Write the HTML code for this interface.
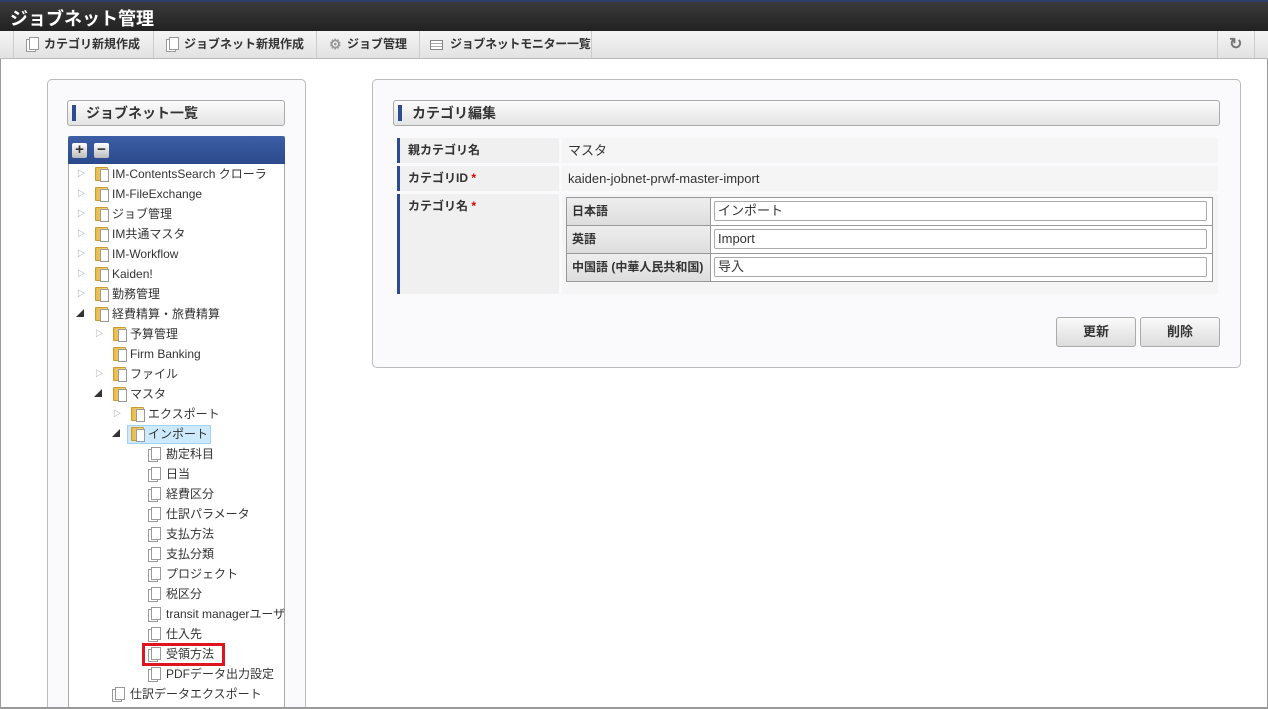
<!DOCTYPE html>
<html><head><meta charset="utf-8"><style>
*{box-sizing:border-box;margin:0;padding:0}
html{overflow:hidden;height:709px}
body{width:1268px;height:709px;overflow:hidden;background:#fff;font-family:"Liberation Sans","Noto Sans CJK JP",sans-serif;font-size:12px;color:#333;position:relative}
.abs{position:absolute}
.title{left:0;top:0;width:1268px;height:31px;background:linear-gradient(#3a3a3a,#222);border-top:2px solid #2d3e6a;color:#fff;font-size:18px;font-weight:bold;padding:3px 0 0 10px}
.tool{left:0;top:31px;width:1268px;height:28px;background:linear-gradient(#f4f4f4,#e2e2e2);border-bottom:1px solid #bbb}
.tb{position:absolute;top:0;height:27px;border-left:1px solid #ccc;font-size:12px;font-weight:bold;color:#333;line-height:27px;padding-left:10px;white-space:nowrap}
.panel{border:1px solid #bbb;border-radius:5px;background:#fafafc}
.hdr{border:1px solid #aaa;border-radius:3px;background:linear-gradient(#fbfbfb,#e4e4e4);font-size:14px;font-weight:bold;color:#333;padding-left:18px;line-height:24px}
.hdr:before{content:"";position:absolute;left:4px;top:4px;width:4px;height:16px;background:#2f4b8f}
.row{position:absolute;left:0;height:20px;line-height:20px;font-size:12px;color:#333;white-space:nowrap}
.arr{position:absolute;top:0;font-size:8px;color:#888}
.fold{position:absolute;top:3px;width:13px;height:14px;background:linear-gradient(90deg,#e9b94a,#f6d982);border:1px solid #c99a2e;border-radius:1px}
.fold:after{content:"";position:absolute;left:4px;top:1px;width:7px;height:11px;background:#fff;border:1px solid #999}
.leaf{position:absolute;top:3px;width:12px;height:14px}
.leaf:before{content:"";position:absolute;left:0;top:2px;width:8px;height:11px;background:#fff;border:1px solid #999}
.leaf:after{content:"";position:absolute;left:3px;top:0;width:8px;height:11px;background:#fff;border:1px solid #999}
.lab{position:absolute;background:#f0f0f0;border-left:3px solid #2f4b8f;font-weight:bold;padding-left:8px;font-size:12px}
.val{position:absolute;background:#f5f5f5;padding-left:6px;font-size:13px}
.req{color:#d00}
.il{position:absolute;background:linear-gradient(#eee,#ddd);font-weight:bold;padding-left:5px;font-size:12px;border-bottom:1px solid #999;line-height:26px}
.inp{position:absolute;background:#fff;border:1px solid #aaa;border-radius:2px;height:20px;font-size:13px;padding-left:3px;line-height:18px}
.btn{position:absolute;top:317px;width:80px;height:30px;border:1px solid #aaa;border-radius:3px;background:linear-gradient(#fafafa,#dcdcdc);text-align:center;line-height:28px;font-weight:bold;font-size:13px}
</style></head><body>
<div class="abs title">ジョブネット管理</div>
<div class="abs tool">
<div class="tb" style="left:13px;width:140px;padding-left:30px">カテゴリ新規作成<span class="leaf" style="left:12px;top:6px"></span></div>
<div class="tb" style="left:153px;width:163px;padding-left:30px">ジョブネット新規作成<span class="leaf" style="left:12px;top:6px"></span></div>
<div class="tb" style="left:316px;width:103px;padding-left:30px"><span style="position:absolute;left:12px;color:#999;font-size:14px">⚙</span>ジョブ管理</div>
<div class="tb" style="left:419px;width:173px;padding-left:30px;border-right:1px solid #ccc;letter-spacing:-0.3px"><span style="position:absolute;left:10px;top:9px;width:13px;height:10px;border:1px solid #888;background:repeating-linear-gradient(#fff 0 2px,#aaa 2px 3px)"></span>ジョブネットモニター一覧</div>
<div class="tb" style="left:1217px;width:38px;border-right:1px solid #ccc;color:#777;font-size:16px;padding-left:11px">↻</div>
</div>
<div class="abs" style="left:0;top:59px;width:1px;height:650px;background:#999"></div>
<div class="abs" style="left:1267px;top:59px;width:1px;height:650px;background:#999"></div>

<div class="abs panel" style="left:47px;top:79px;width:259px;height:640px"></div>
<div class="abs hdr" style="left:67px;top:100px;width:218px;height:26px">ジョブネット一覧</div>
<div class="abs" style="left:68px;top:136px;width:217px;height:580px;border:1px solid #aaa;background:#fff"></div>
<div class="abs" style="left:68px;top:136px;width:217px;height:28px;background:linear-gradient(#3d5ea5,#2b4a8c);border-radius:3px 3px 0 0">
<div class="abs" style="left:4px;top:7px;width:15px;height:15px;background:linear-gradient(#fff,#bbb);border-radius:2px;font-weight:bold;font-size:15px;line-height:14px;text-align:center;color:#333">+</div>
<div class="abs" style="left:26px;top:7px;width:15px;height:15px;background:linear-gradient(#fff,#bbb);border-radius:2px;font-weight:bold;font-size:15px;line-height:13px;text-align:center;color:#333">−</div>
</div>
<div class="abs" style="left:68px;top:164px;width:217px;height:545px;overflow:hidden">
<div class="row" style="top:0"><span class="arr" style="left:9px">▷</span><span class="fold" style="left:27px"></span><span style="position:absolute;left:44px">IM-ContentsSearch クローラ</span></div>
<div class="row" style="top:20px"><span class="arr" style="left:9px">▷</span><span class="fold" style="left:27px"></span><span style="position:absolute;left:44px">IM-FileExchange</span></div>
<div class="row" style="top:40px"><span class="arr" style="left:9px">▷</span><span class="fold" style="left:27px"></span><span style="position:absolute;left:44px">ジョブ管理</span></div>
<div class="row" style="top:60px"><span class="arr" style="left:9px">▷</span><span class="fold" style="left:27px"></span><span style="position:absolute;left:44px">IM共通マスタ</span></div>
<div class="row" style="top:80px"><span class="arr" style="left:9px">▷</span><span class="fold" style="left:27px"></span><span style="position:absolute;left:44px">IM-Workflow</span></div>
<div class="row" style="top:100px"><span class="arr" style="left:9px">▷</span><span class="fold" style="left:27px"></span><span style="position:absolute;left:44px">Kaiden!</span></div>
<div class="row" style="top:120px"><span class="arr" style="left:9px">▷</span><span class="fold" style="left:27px"></span><span style="position:absolute;left:44px">勤務管理</span></div>
<div class="row" style="top:140px"><span class="arr" style="left:8px;color:#333">◢</span><span class="fold" style="left:27px"></span><span style="position:absolute;left:44px">経費精算・旅費精算</span></div>
<div class="row" style="top:160px"><span class="arr" style="left:27px">▷</span><span class="fold" style="left:45px"></span><span style="position:absolute;left:62px">予算管理</span></div>
<div class="row" style="top:180px"><span class="fold" style="left:45px"></span><span style="position:absolute;left:62px">Firm Banking</span></div>
<div class="row" style="top:200px"><span class="arr" style="left:27px">▷</span><span class="fold" style="left:45px"></span><span style="position:absolute;left:62px">ファイル</span></div>
<div class="row" style="top:220px"><span class="arr" style="left:26px;color:#333">◢</span><span class="fold" style="left:45px"></span><span style="position:absolute;left:62px">マスタ</span></div>
<div class="row" style="top:240px"><span class="arr" style="left:45px">▷</span><span class="fold" style="left:63px"></span><span style="position:absolute;left:80px">エクスポート</span></div>
<div class="row" style="top:260px"><span class="arr" style="left:44px;color:#333">◢</span><span style="position:absolute;left:59px;top:1px;width:84px;height:19px;background:#cdeafc;border:1px solid #9fd4f4"></span><span class="fold" style="left:63px"></span><span style="position:absolute;left:80px">インポート</span></div>
<div class="row" style="top:280px"><span class="leaf" style="left:80px"></span><span style="position:absolute;left:98px">勘定科目</span></div>
<div class="row" style="top:300px"><span class="leaf" style="left:80px"></span><span style="position:absolute;left:98px">日当</span></div>
<div class="row" style="top:320px"><span class="leaf" style="left:80px"></span><span style="position:absolute;left:98px">経費区分</span></div>
<div class="row" style="top:340px"><span class="leaf" style="left:80px"></span><span style="position:absolute;left:98px">仕訳パラメータ</span></div>
<div class="row" style="top:360px"><span class="leaf" style="left:80px"></span><span style="position:absolute;left:98px">支払方法</span></div>
<div class="row" style="top:380px"><span class="leaf" style="left:80px"></span><span style="position:absolute;left:98px">支払分類</span></div>
<div class="row" style="top:400px"><span class="leaf" style="left:80px"></span><span style="position:absolute;left:98px">プロジェクト</span></div>
<div class="row" style="top:420px"><span class="leaf" style="left:80px"></span><span style="position:absolute;left:98px">税区分</span></div>
<div class="row" style="top:440px"><span class="leaf" style="left:80px"></span><span style="position:absolute;left:98px">transit managerユーザ</span></div>
<div class="row" style="top:460px"><span class="leaf" style="left:80px"></span><span style="position:absolute;left:98px">仕入先</span></div>
<div class="row" style="top:480px"><span style="position:absolute;left:74px;top:-1px;width:83px;height:23px;border:3px solid #e0141e"></span><span class="leaf" style="left:80px"></span><span style="position:absolute;left:98px">受領方法</span></div>
<div class="row" style="top:500px"><span class="leaf" style="left:80px"></span><span style="position:absolute;left:98px">PDFデータ出力設定</span></div>
<div class="row" style="top:520px"><span class="leaf" style="left:44px"></span><span style="position:absolute;left:62px">仕訳データエクスポート</span></div>
</div>

<div class="abs panel" style="left:372px;top:79px;width:869px;height:289px"></div>
<div class="abs hdr" style="left:393px;top:100px;width:827px;height:26px">カテゴリ編集</div>
<div class="lab" style="left:397px;top:138px;width:162px;height:25px;line-height:25px">親カテゴリ名</div>
<div class="val" style="left:562px;top:138px;width:656px;height:25px;line-height:25px">マスタ</div>
<div class="lab" style="left:397px;top:166px;width:162px;height:25px;line-height:25px">カテゴリID <span class="req">*</span></div>
<div class="val" style="left:562px;top:166px;width:656px;height:25px;line-height:25px">kaiden-jobnet-prwf-master-import</div>
<div class="lab" style="left:397px;top:194px;width:162px;height:100px;line-height:25px">カテゴリ名 <span class="req">*</span></div>
<div class="val" style="left:562px;top:194px;width:656px;height:100px"></div>
<div class="abs" style="left:566px;top:197px;width:647px;height:85px;border:1px solid #999;background:#fff"></div>
<div class="il" style="left:567px;top:198px;width:143px;height:28px">日本語</div>
<div class="il" style="left:567px;top:226px;width:143px;height:28px">英語</div>
<div class="il" style="left:567px;top:254px;width:143px;height:27px;border-bottom:0">中国語 (中華人民共和国)</div>
<div class="abs" style="left:710px;top:198px;width:1px;height:83px;background:#999"></div>
<div class="abs" style="left:711px;top:225px;width:501px;height:1px;background:#999"></div>
<div class="abs" style="left:711px;top:253px;width:501px;height:1px;background:#999"></div>
<div class="inp" style="left:714px;top:201px;width:493px">インポート</div>
<div class="inp" style="left:714px;top:229px;width:493px">Import</div>
<div class="inp" style="left:714px;top:257px;width:493px">导入</div>
<div class="btn" style="left:1056px">更新</div>
<div class="btn" style="left:1140px">削除</div>
<div class="abs" style="left:0;top:707px;width:1268px;height:2px;background:#999"></div>
</body></html>
